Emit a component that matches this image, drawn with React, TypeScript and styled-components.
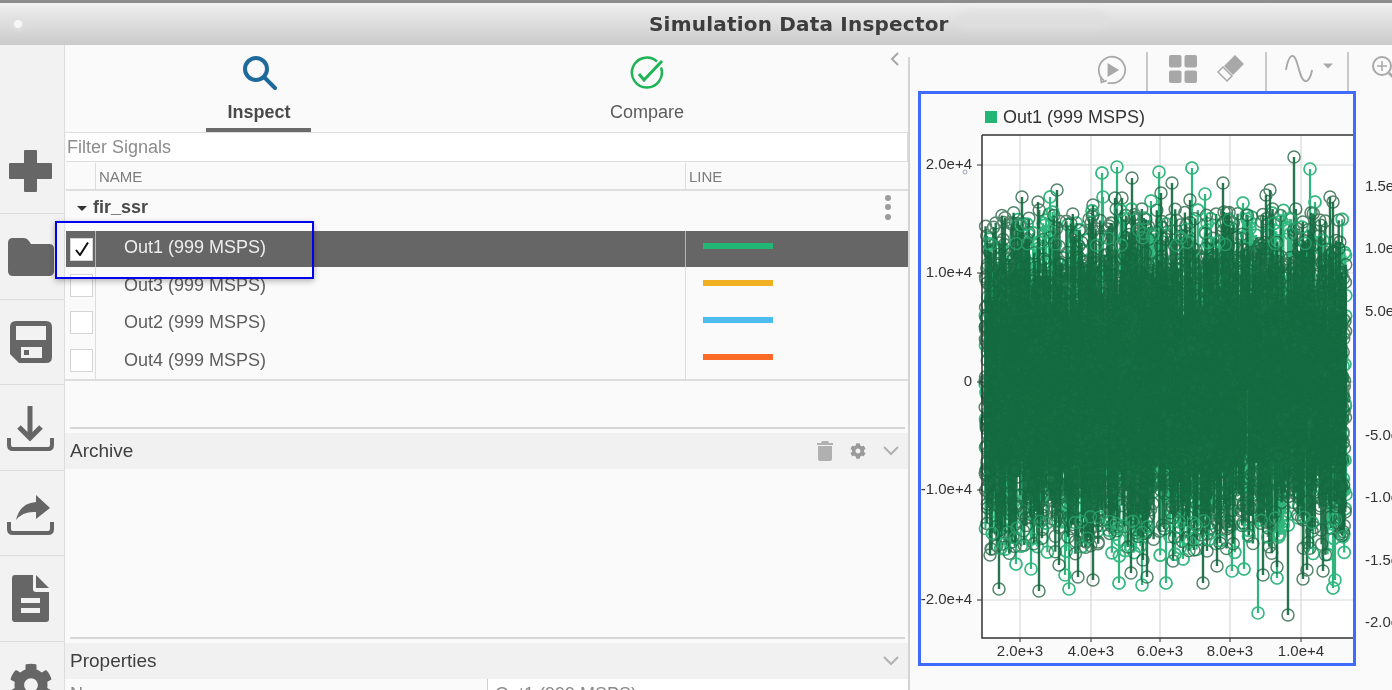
import React, { useMemo } from "react";
import styled, { createGlobalStyle } from "styled-components";
import { FaCog } from "react-icons/fa";

const GlobalStyle = createGlobalStyle`
  html, body {
    margin: 0;
    padding: 0;
    height: 690px;
    overflow: hidden;
    background: #fafafa;
    font-family: "Liberation Sans", Arial, sans-serif;
  }
`

const Page = styled.div`
  position: relative;
  width: 1392px;
  height: 690px;
  overflow: hidden;
  filter: blur(0.35px);
`
const TitleBar = styled.div`
  height: 45px;
  box-sizing: border-box;
  border-top: 3px solid #8d8d8d;
  background: linear-gradient(#f1f1f1, #e4e4e4 30%, #cbcbcb);
  display: flex;
  align-items: center;
`
const WindowDot = styled.div`
  width: 8px;
  height: 8px;
  margin-left: 14px;
  border-radius: 50%;
  background: #f7f7f7;
  box-shadow: 0 0 4px 2px #e0e0e0;
`
const WindowTitle = styled.div`
  margin-left: 627px;
  font-family: "DejaVu Sans", sans-serif;
  font-weight: bold;
  font-size: 20px;
  letter-spacing: 0.2px;
  color: #3d3d3d;
  white-space: nowrap;
`
const Smudge = styled.div`
  position: absolute;
  left: 958px;
  top: 12px;
  width: 150px;
  height: 16px;
  border-radius: 8px;
  background: #dedede;
  filter: blur(5px);
`
const Body = styled.div`
  display: flex;
  height: 645px;
`

const Sidebar = styled.div`
  width: 65px;
  flex: none;
  box-sizing: border-box;
  background: #f2f2f2;
  border-right: 1px solid #dcdcdc;
  display: flex;
  flex-direction: column;
`
const SideCell = styled.div<{ $height: number; $first?: boolean; $shift?: number }>`
  height: ${(p) => p.$height}px;
  flex: none;
  box-sizing: border-box;
  display: flex;
  justify-content: center;
  align-items: ${(p) => (p.$first ? "flex-end" : "center")};
  padding-bottom: ${(p) => (p.$first ? "21px" : "0")};
  padding-top: ${(p) => p.$shift ?? 0}px;
  padding-right: 3px;
  border-bottom: 1px solid #dcdcdc;
  color: #666;
`

const MainPanel = styled.div`
  width: 845px;
  flex: none;
  display: flex;
  flex-direction: column;
  background: #fafafa;
`
const Tabs = styled.div`
  height: 88px;
  flex: none;
  position: relative;
  display: grid;
  grid-template-columns: 388px 388px;
  border-bottom: 1px solid #dedede;
  box-sizing: border-box;
`
const Tab = styled.div<{ $active?: boolean }>`
  display: flex;
  flex-direction: column;
  align-items: center;
  padding-top: 10px;
  font-size: 18px;
  font-weight: ${(p) => (p.$active ? "bold" : "normal")};
  color: ${(p) => (p.$active ? "#4a4a4a" : "#5c5c5c")};
`
const TabIcon = styled.div`
  height: 36px;
  margin-bottom: 11px;
`
const TabLabel = styled.div`
  line-height: 21px;
`
const TabUnderline = styled.div<{ $active?: boolean }>`
  width: 105px;
  height: 4px;
  margin: 5px 2px 0 0;
  background: ${(p) => (p.$active ? "#6a6a6a" : "transparent")};
`
const CollapseHandle = styled.div`
  position: absolute;
  right: 10px;
  top: 7px;
  color: #a8a8a8;
`
const FilterInput = styled.div`
  height: 28px;
  flex: none;
  margin: 0 1px;
  padding-left: 1px;
  background: #fff;
  border-right: 2px solid #dcdcdc;
  font-size: 18px;
  line-height: 28px;
  color: #8c8c8c;
`
const GridRow = styled.div<{ $height: number; $selected?: boolean }>`
  height: ${(p) => p.$height}px;
  flex: none;
  margin-left: 1px;
  display: grid;
  grid-template-columns: 30px 589px 223px;
  background: ${(p) => (p.$selected ? "#666" : "transparent")};
`
const HeaderRow = styled(GridRow)`
  border-top: 1px solid #dedede;
  border-bottom: 2px solid #dedede;
  box-sizing: border-box;
  padding-top: 1px;
  font-size: 15px;
  color: #7d7d7d;
`
const CheckCell = styled.div<{ $selected?: boolean }>`
  display: flex;
  align-items: center;
  padding-left: 4px;
  border-right: 1px solid ${(p) => (p.$selected ? "#b5b5b5" : "#dcdcdc")};
`
const CheckBox = styled.div`
  width: 23px;
  height: 23px;
  box-sizing: border-box;
  background: #fff;
  border: 1px solid #d4d4d4;
  display: flex;
  align-items: center;
  justify-content: center;
`
const NameCell = styled.div<{ $selected?: boolean }>`
  display: flex;
  align-items: center;
  padding-left: 28px;
  padding-bottom: ${(p) => (p.$selected ? "3px" : "0")};
  font-size: 18px;
  color: ${(p) => (p.$selected ? "#eeeeee" : "#5e5e5e")};
`
const HeaderLabel = styled.div`
  display: flex;
  align-items: center;
  padding-left: 3px;
`
const HeaderCheck = styled.div`
  border-right: 1px solid #dcdcdc;
`
const LineCell = styled.div<{ $selected?: boolean }>`
  display: flex;
  align-items: center;
  padding-left: 17px;
  border-left: 1px solid ${(p) => (p.$selected ? "#b5b5b5" : "#dcdcdc")};
`
const LineHeader = styled(HeaderLabel)`
  border-left: 1px solid #dcdcdc;
`
const Swatch = styled.div<{ $color: string }>`
  width: 70px;
  height: 6px;
  margin-bottom: 6px;
  background: ${(p) => p.$color};
`
const GroupRow = styled.div`
  height: 40px;
  flex: none;
  box-sizing: border-box;
  display: flex;
  align-items: center;
  padding: 0 19px 8px 12px;
  font-size: 18px;
  font-weight: bold;
  color: #4a4a4a;
`
const GroupCaret = styled.div`
  width: 0;
  height: 0;
  margin: 3px 6px 0 0;
  border-left: 5.5px solid transparent;
  border-right: 5.5px solid transparent;
  border-top: 5.5px solid #333;
`
const GroupDots = styled.div`
  margin-left: auto;
  display: flex;
  flex-direction: column;
  gap: 3.5px;
`
const Dot = styled.div`
  width: 6px;
  height: 6px;
  border-radius: 50%;
  background: #9c9c9c;
`
const TableEnd = styled.div`
  height: 48px;
  flex: none;
  border-top: 2px solid #dedede;
  box-sizing: border-box;
`
const SectionRule = styled.div`
  height: 2px;
  flex: none;
  margin: 0 5px;
  background: #d6d6d6;
`
const SectionHeader = styled.div`
  height: 36px;
  flex: none;
  box-sizing: border-box;
  margin-top: 4px;
  padding: 0 11px 0 5px;
  display: flex;
  align-items: center;
  background: #f1f1f1;
  font-size: 19px;
  color: #3f3f3f;
`
const SectionTools = styled.div`
  margin-left: auto;
  display: flex;
  align-items: center;
  color: #b0b0b0;
`
const ToolSpot = styled.div<{ $width: number }>`
  width: ${(p) => p.$width}px;
  display: flex;
  justify-content: center;
  align-items: center;
`
const ArchiveBody = styled.div`
  height: 168px;
  flex: none;
`
const PropsRow = styled.div`
  height: 11px;
  flex: none;
  display: grid;
  grid-template-columns: 422px 1fr;
  font-size: 18px;
  line-height: 18px;
  color: #8a8a8a;
  overflow: hidden;
`
const PropsName = styled.div`
  padding: 6px 0 0 5px;
`
const PropsValue = styled.div`
  padding: 6px 0 0 7px;
  background: #fff;
  border-left: 1px solid #cfcfcf;
`

const RightPanel = styled.div`
  position: relative;
  flex: 1;
  min-width: 0;
  background: #fafafa;
  &::before {
    content: "";
    position: absolute;
    left: -2px;
    top: 12px;
    bottom: 0;
    width: 2px;
    background: #d4d4d4;
  }
`
const Toolbar = styled.div`
  height: 46px;
  box-sizing: border-box;
  padding: 7px 0 0 185px;
  display: flex;
  color: #a8a8a8;
`
const ToolGroup = styled.div<{ $width: number; $pad: number; $last?: boolean }>`
  width: ${(p) => p.$width}px;
  flex: none;
  box-sizing: border-box;
  padding-left: ${(p) => p.$pad}px;
  padding-top: 3px;
  display: flex;
  gap: 20px;
  align-items: flex-start;
  border-right: ${(p) => (p.$last ? "none" : "2px solid #c9c9c9")};
`
const PlotRow = styled.div`
  display: flex;
  padding-left: 8px;
`
const PlotFrame = styled.div`
  width: 438px;
  height: 575px;
  box-sizing: border-box;
  flex: none;
  border: 3px solid #3f6bff;
  display: flex;
  flex-direction: column;
`
const Legend = styled.div`
  height: 40px;
  flex: none;
  padding: 6px 0 0 64px;
  box-sizing: border-box;
  display: flex;
  align-items: center;
  gap: 6px;
  font-size: 18px;
  color: #333;
`
const LegendSwatch = styled.div`
  width: 12px;
  height: 12px;
  background: #22b573;
`
const SideAxis = styled.div`
  padding: 80px 0 0 9px;
  font-size: 15px;
  color: #333;
  white-space: nowrap;
`
const SideLabel = styled.div`
  height: 62.3px;
  line-height: 30px;
`
const Highlight = styled.div`
  position: absolute;
  left: 55px;
  top: 221px;
  width: 259px;
  height: 58px;
  box-sizing: border-box;
  border: 2px solid #0000f0;
  box-shadow: 0 2px 6px rgba(0, 0, 0, 0.3);
`

/* ---- chart data ---- */
type Mark = [number, number]

const LIGHT_PEAKS: Mark[] = [
  [1102, 173], [1117, 167], [1050, 197], [1103, 197], [1151, 201], [1159, 172], [1192, 168],
  [1205, 194], [1243, 203], [1310, 169], [1315, 202], [1069, 589], [1119, 583], [1142, 585],
  [1166, 583], [1258, 613], [1333, 588], [1335, 580], [1277, 578], [1232, 571], [1244, 569],
  [1031, 569], [1016, 564], [1065, 575], [1183, 559],
]
const DARK_PEAKS: Mark[] = [
  [1132, 178], [1022, 197], [1057, 190], [1038, 202], [1093, 205], [1115, 198], [1122, 198],
  [1172, 183], [1223, 183], [1294, 157], [1161, 193], [1270, 190], [1266, 195], [1330, 197],
  [1333, 202], [1190, 200], [999, 589], [1039, 591], [1093, 580], [1078, 577], [1147, 577],
  [1131, 573], [1203, 583], [1288, 615], [1303, 579], [1263, 575], [1323, 571], [1217, 566],
  [1059, 565], [990, 555], [1173, 561], [1277, 567], [1307, 570], [1143, 560],
]

function makeRandom(seed: number) {
  let a = seed
  return () => {
    a = (a + 0x6d2b79f5) | 0
    let t = Math.imul(a ^ (a >>> 15), 1 | a)
    t = (t + Math.imul(t ^ (t >>> 7), 61 | t)) ^ t
    return ((t ^ (t >>> 14)) >>> 0) / 4294967296
  }
}

function makeSeries(seed: number, count: number, sigma: number, peaks: Mark[]): Mark[] {
  const rnd = makeRandom(seed)
  const out: Mark[] = []
  while (out.length < count) {
    const g = Math.sqrt(-2 * Math.log(rnd() + 1e-6)) * Math.cos(2 * Math.PI * rnd())
    const y = 381 + g * sigma
    if (y < 208 || y > 556) continue
    out.push([985 + rnd() * 361, y])
  }
  return out.concat(peaks)
}

const stemPath = (pts: Mark[]) => pts.map(([x, y]) => `M${x.toFixed(1)} 381V${y.toFixed(1)}`).join("")
const ringPath = (pts: Mark[]) =>
  pts.map(([x, y]) => `M${(x - 6).toFixed(1)} ${y.toFixed(1)}a6 6 0 1 0 12 0a6 6 0 1 0 -12 0`).join("")

const X_TICKS: [number, string][] = [[1020, "2.0e+3"], [1091, "4.0e+3"], [1160, "6.0e+3"], [1230, "8.0e+3"], [1301, "1.0e+4"]]
const Y_TICKS: [number, string][] = [[165, "2.0e+4"], [273, "1.0e+4"], [382, "0"], [490, "-1.0e+4"], [600, "-2.0e+4"]]

function Chart(): React.JSX.Element {
  const light = useMemo(() => makeSeries(11, 2000, 98, LIGHT_PEAKS), [])
  const dark = useMemo(() => makeSeries(29, 3100, 95, DARK_PEAKS), [])
  // light rings out on the fringe sit over the dark stems
  const fringe = useMemo(() => light.filter(([, y]) => Math.abs(y - 381) > 135).filter((_, i) => i % 2 === 0), [light])
  return (
    <svg width={432} height={529} viewBox="921 134 432 529" style={{ display: "block" }}>
      <rect x={982} y={135} width={372} height={503} fill="#fff" />
      {X_TICKS.map(([x]) => <line key={x} x1={x} x2={x} y1={135} y2={638} stroke="#d8d8d8" strokeWidth={1.2} />)}
      {Y_TICKS.map(([y]) => <line key={y} x1={982} x2={1354} y1={y} y2={y} stroke="#d8d8d8" strokeWidth={1.2} />)}
      <path d={ringPath(light)} stroke="#35b981" strokeWidth={1.7} fill="none" />
      <path d={stemPath(light)} stroke="#2fb67c" strokeWidth={2.2} fill="none" />
      <path d={ringPath(dark)} stroke="#1b5c3a" strokeWidth={1.5} fill="none" opacity={0.75} />
      <path d={stemPath(dark)} stroke="#14693f" strokeWidth={2.4} fill="none" opacity={0.92} />
      <path d={ringPath(fringe)} stroke="#35b981" strokeWidth={1.4} fill="none" opacity={0.6} />
      <path d="M982 135H1354M982 135V638H1354" stroke="#333" strokeWidth={1.5} fill="none" />
      {X_TICKS.map(([x, label]) => (
        <g key={x}>
          <line x1={x} x2={x} y1={638} y2={642} stroke="#333" />
          <text x={x} y={656} textAnchor="middle" fontSize={15} fill="#333" fontFamily="Liberation Sans">{label}</text>
        </g>
      ))}
      {Y_TICKS.map(([y, label]) => (
        <g key={y}>
          <line x1={977} x2={982} y1={y} y2={y} stroke="#333" />
          <text x={972} y={y + 4} textAnchor="end" fontSize={15} fill="#333" fontFamily="Liberation Sans">{label}</text>
        </g>
      ))}
      <circle cx={965} cy={172} r={2} fill="none" stroke="#9aa3b8" />
    </svg>
  )
}

/* ---- icons ---- */
const PlusIcon = () => (
  <svg width={43} height={42} viewBox="0 0 43 42" fill="currentColor">
    <path d="M15 1q0-1 1-1h11q1 0 1 1v12h14q1 0 1 1v14q0 1-1 1H28v12q0 1-1 1H16q-1 0-1-1V29H1q-1 0-1-1V14q0-1 1-1h14z" />
  </svg>
)
const FolderIcon = () => (
  <svg width={46} height={38} viewBox="0 0 46 38" fill="currentColor">
    <path d="M5 0h11q3 0 5 3l2 3h18q5 0 5 5v22q0 5-5 5H5q-5 0-5-5V5q0-5 5-5z" />
  </svg>
)
const SaveIcon = () => (
  <svg width={42} height={42} viewBox="0 0 42 42" fill="currentColor" fillRule="evenodd">
    <path d="M6 0h30q6 0 6 6v30q0 6-6 6H9l-9-9V6q0-6 6-6zM6 5v14h30V5zM11 26v11h21V26z" />
    <rect x={14} y={29} width={5} height={5} />
  </svg>
)
const TrayPath = ({ y }: { y: number }) => (
  <path d={`M2 ${y}v7q0 4 4 4h35q4 0 4-4v-7`} fill="none" stroke="currentColor" strokeWidth={4} />
)
const DownloadIcon = () => (
  <svg width={47} height={48} viewBox="0 0 47 48">
    <path d="M20.500 1h5v30h-5z" fill="currentColor" />
    <path d="M12 22l11 11 11-11" fill="none" stroke="currentColor" strokeWidth={5} />
    <TrayPath y={33} />
  </svg>
)
const ShareIcon = () => (
  <svg width={47} height={41} viewBox="0 0 47 41">
    <path d="M29 0l14 13-14 11v-7Q16 16 9 25 13 8 29 7z" fill="currentColor" />
    <TrayPath y={27} />
  </svg>
)
const FileIcon = () => (
  <svg width={38} height={47} viewBox="0 0 38 47" fill="currentColor" fillRule="evenodd">
    <path d="M3 0h18v14q0 3 3 3h13v27q0 3-3 3H3q-3 0-3-3V3q0-3 3-3zM9 23v5h19v-5zM9 33v5h19v-5z" />
    <path d="M24 0l13 13H24z" />
  </svg>
)
const SearchIcon = () => (
  <svg width={36} height={36} viewBox="0 0 36 36" fill="none" stroke="#1d6a9b" strokeWidth={4}>
    <circle cx={15} cy={14} r={11} />
    <path d="M23 22l11 11" strokeLinecap="round" />
  </svg>
)
const CompareIcon = () => (
  <svg width={36} height={36} viewBox="0 0 36 36" fill="none" stroke="#1cb454" strokeWidth={2.500}>
    <path d="M28 6.500A15 15 0 1 0 32 12.500" />
    <path d="M10 19l5 6L33 6" strokeWidth={3} />
  </svg>
)
const ChevronDown = () => (
  <svg width={16} height={10} viewBox="0 0 16 10" fill="none" stroke="#b0b0b0" strokeWidth={2}>
    <path d="M1 1l7 7 7-7" />
  </svg>
)
const TrashIcon = () => (
  <svg width={16} height={20} viewBox="0 0 16 20" fill="currentColor">
    <path d="M5 0h6l1 2h4v2H0V2h4z" />
    <path d="M1 5h14v13q0 2-2 2H3q-2 0-2-2z" />
  </svg>
)
const PlayIcon = () => (
  <svg width={30} height={30} viewBox="0 0 34 34" fill="none" stroke="currentColor" strokeWidth={2}>
    <path d="M8 29A15 15 0 1 1 17 32H12" />
    <path d="M4 24l1 7 6-2" />
    <path d="M12 9l13 8-13 8z" fill="currentColor" stroke="none" />
  </svg>
)
const GridIcon = () => (
  <svg width={28} height={28} viewBox="0 0 28 28" fill="currentColor">
    <rect width={12.500} height={12.500} rx={2} />
    <rect x={15.500} width={12.500} height={12.500} rx={2} />
    <rect y={15.500} width={12.500} height={12.500} rx={2} />
    <rect x={15.500} y={15.500} width={12.500} height={12.500} rx={2} />
  </svg>
)
const EraserIcon = () => (
  <svg width={28} height={28} viewBox="0 0 28 28" fill="currentColor">
    <path d="M18 0l9 9-11 11-9-9z" />
    <path d="M6 12l9 9-5 5-9-9z" fill="#fafafa" stroke="currentColor" strokeWidth={1.500} />
  </svg>
)
const WaveIcon = () => (
  <svg width={28} height={28} viewBox="0 0 30 30" fill="none" stroke="currentColor" strokeWidth={2}>
    <path d="M1 16C3 5 5 1 8 1c6 0 7 27 14 27 3 0 6-5 7-12" />
  </svg>
)
const CaretIcon = () => (
  <svg width={10} height={6} viewBox="0 0 12 6" fill="currentColor" style={{ marginTop: 8, marginLeft: -10 }}>
    <path d="M0 0h12L6 6z" />
  </svg>
)
const ZoomIcon = () => (
  <svg width={30} height={30} viewBox="0 0 30 30" fill="none" stroke="currentColor" strokeWidth={2}>
    <circle cx={11} cy={11} r={9} />
    <path d="M11 6v10M6 11h10" strokeWidth={1.500} />
    <path d="M18 18l9 9" strokeWidth={3} />
  </svg>
)

const SIGNALS = [
  { name: "Out1 (999 MSPS)", color: "#22b573", selected: true, height: 36 },
  { name: "Out3 (999 MSPS)", color: "#f0b022", selected: false, height: 37 },
  { name: "Out2 (999 MSPS)", color: "#4dbdee", selected: false, height: 37 },
  { name: "Out4 (999 MSPS)", color: "#fb6a27", selected: false, height: 38 },
]
const SIDE_LABELS = ["1.5e+4", "1.0e+4", "5.0e+3", "", "-5.0e+3", "-1.0e+4", "-1.5e+4", "-2.0e+4"]

export default function App(): React.JSX.Element {
  return (
    <Page>
      <GlobalStyle />
      <TitleBar>
        <WindowDot />
        <WindowTitle>Simulation Data Inspector</WindowTitle>
        <Smudge />
      </TitleBar>
      <Body>
        <Sidebar>
          <SideCell $height={169} $first><PlusIcon /></SideCell>
          <SideCell $height={86}><FolderIcon /></SideCell>
          <SideCell $height={85}><SaveIcon /></SideCell>
          <SideCell $height={86} $shift={3}><DownloadIcon /></SideCell>
          <SideCell $height={85} $shift={4}><ShareIcon /></SideCell>
          <SideCell $height={86}><FileIcon /></SideCell>
          <SideCell $height={86}><FaCog size={44} /></SideCell>
        </Sidebar>
        <MainPanel>
          <Tabs>
            <Tab $active>
              <TabIcon><SearchIcon /></TabIcon>
              <TabLabel>Inspect</TabLabel>
              <TabUnderline $active />
            </Tab>
            <Tab>
              <TabIcon><CompareIcon /></TabIcon>
              <TabLabel>Compare</TabLabel>
              <TabUnderline />
            </Tab>
            <CollapseHandle>
              <svg width={10} height={14} viewBox="0 0 10 14" fill="none" stroke="currentColor" strokeWidth={2}>
                <path d="M8 1L2 7l6 6" />
              </svg>
            </CollapseHandle>
          </Tabs>
          <FilterInput>Filter Signals</FilterInput>
          <HeaderRow $height={30}>
            <HeaderCheck />
            <HeaderLabel>NAME</HeaderLabel>
            <LineHeader>LINE</LineHeader>
          </HeaderRow>
          <GroupRow>
            <GroupCaret />
            fir_ssr
            <GroupDots><Dot /><Dot /><Dot /></GroupDots>
          </GroupRow>
          {SIGNALS.map((s) => (
            <GridRow key={s.name} $height={s.height} $selected={s.selected}>
              <CheckCell $selected={s.selected}>
                <CheckBox>
                  {s.selected && (
                    <svg width={14} height={14} viewBox="0 0 14 14" fill="none" stroke="#111" strokeWidth={2}>
                      <path d="M1 8l4 5L13 0.500" />
                    </svg>
                  )}
                </CheckBox>
              </CheckCell>
              <NameCell $selected={s.selected}>{s.name}</NameCell>
              <LineCell $selected={s.selected}><Swatch $color={s.color} /></LineCell>
            </GridRow>
          ))}
          <TableEnd />
          <SectionRule />
          <SectionHeader>
            Archive
            <SectionTools>
              <ToolSpot $width={16}><TrashIcon /></ToolSpot>
              <ToolSpot $width={50}><FaCog size={16} color="#9a9a9a" /></ToolSpot>
              <ToolSpot $width={16}><ChevronDown /></ToolSpot>
            </SectionTools>
          </SectionHeader>
          <ArchiveBody />
          <SectionRule />
          <SectionHeader>
            Properties
            <SectionTools>
              <ToolSpot $width={16}><ChevronDown /></ToolSpot>
            </SectionTools>
          </SectionHeader>
          <PropsRow>
            <PropsName>Name</PropsName>
            <PropsValue>Out1 (999 MSPS)</PropsValue>
          </PropsRow>
        </MainPanel>
        <RightPanel>
          <Toolbar>
            <ToolGroup $width={53} $pad={2}><PlayIcon /></ToolGroup>
            <ToolGroup $width={119} $pad={21}><GridIcon /><EraserIcon /></ToolGroup>
            <ToolGroup $width={82} $pad={18}><WaveIcon /><CaretIcon /></ToolGroup>
            <ToolGroup $width={60} $pad={22} $last><ZoomIcon /></ToolGroup>
          </Toolbar>
          <PlotRow>
            <PlotFrame>
              <Legend><LegendSwatch />Out1 (999 MSPS)</Legend>
              <Chart />
            </PlotFrame>
            <SideAxis>
              {SIDE_LABELS.map((l, i) => <SideLabel key={i}>{l}</SideLabel>)}
            </SideAxis>
          </PlotRow>
        </RightPanel>
      </Body>
      <Highlight />
    </Page>
  )
}
